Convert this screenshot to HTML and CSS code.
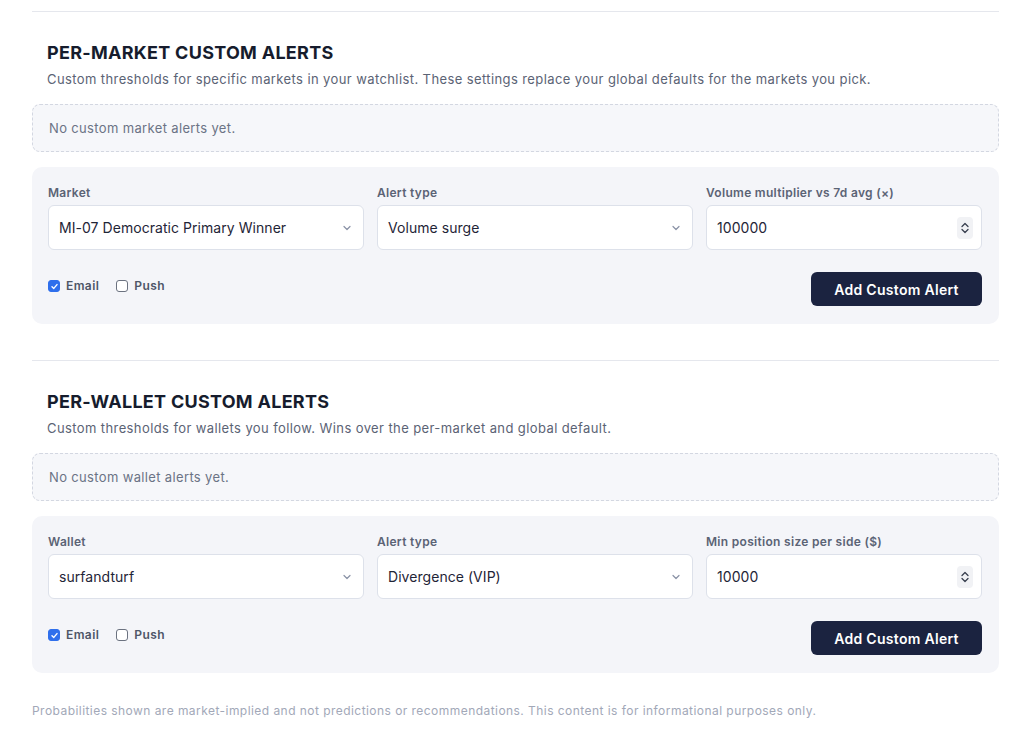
FILE: index.html
```html
<!DOCTYPE html>
<html>
<head>
<meta charset="utf-8">
<link rel="stylesheet" href="styles.css">
</head>
<body>
<div class="page">
  <section class="section">
    <hr class="divider">
    <div class="head">
      <h2 class="title">PER-MARKET CUSTOM ALERTS</h2>
      <p class="desc">Custom thresholds for specific markets in your watchlist. These settings replace your global defaults for the markets you pick.</p>
    </div>
    <div class="empty">No custom market alerts yet.</div>
    <div class="card">
      <div class="fields">
        <div class="field">
          <label class="label">Market</label>
          <div class="control select"><span>MI-07 Democratic Primary Winner</span><svg class="chev" width="8" height="6" viewBox="0 0 8 6"><path d="M1 1.5 L4 4.5 L7 1.5" fill="none" stroke="#8a92a6" stroke-width="1.2" stroke-linecap="round" stroke-linejoin="round"/></svg></div>
        </div>
        <div class="field">
          <label class="label">Alert type</label>
          <div class="control select"><span>Volume surge</span><svg class="chev" width="8" height="6" viewBox="0 0 8 6"><path d="M1 1.5 L4 4.5 L7 1.5" fill="none" stroke="#8a92a6" stroke-width="1.2" stroke-linecap="round" stroke-linejoin="round"/></svg></div>
        </div>
        <div class="field">
          <label class="label">Volume multiplier vs 7d avg (×)</label>
          <div class="control number"><span>100000</span><span class="spin"><svg width="10" height="14" viewBox="0 0 10 14"><path d="M2 5.5 L5 2.5 L8 5.5 M2 8.5 L5 11.5 L8 8.5" fill="none" stroke="#3a4150" stroke-width="1.3" stroke-linecap="round" stroke-linejoin="round"/></svg></span></div>
        </div>
      </div>
      <div class="actions">
        <div class="checks">
          <label class="check"><span class="box on"><svg width="9" height="9" viewBox="0 0 9 9"><path d="M2 4.7 L3.8 6.4 L7 2.6" fill="none" stroke="#fff" stroke-width="1.4" stroke-linecap="round" stroke-linejoin="round"/></svg></span>Email</label>
          <label class="check"><span class="box"></span>Push</label>
        </div>
        <button class="btn">Add Custom Alert</button>
      </div>
    </div>
  </section>

  <section class="section">
    <hr class="divider">
    <div class="head">
      <h2 class="title">PER-WALLET CUSTOM ALERTS</h2>
      <p class="desc">Custom thresholds for wallets you follow. Wins over the per-market and global default.</p>
    </div>
    <div class="empty">No custom wallet alerts yet.</div>
    <div class="card">
      <div class="fields">
        <div class="field">
          <label class="label">Wallet</label>
          <div class="control select"><span>surfandturf</span><svg class="chev" width="8" height="6" viewBox="0 0 8 6"><path d="M1 1.5 L4 4.5 L7 1.5" fill="none" stroke="#8a92a6" stroke-width="1.2" stroke-linecap="round" stroke-linejoin="round"/></svg></div>
        </div>
        <div class="field">
          <label class="label">Alert type</label>
          <div class="control select"><span>Divergence (VIP)</span><svg class="chev" width="8" height="6" viewBox="0 0 8 6"><path d="M1 1.5 L4 4.5 L7 1.5" fill="none" stroke="#8a92a6" stroke-width="1.2" stroke-linecap="round" stroke-linejoin="round"/></svg></div>
        </div>
        <div class="field">
          <label class="label">Min position size per side ($)</label>
          <div class="control number"><span>10000</span><span class="spin"><svg width="10" height="14" viewBox="0 0 10 14"><path d="M2 5.5 L5 2.5 L8 5.5 M2 8.5 L5 11.5 L8 8.5" fill="none" stroke="#3a4150" stroke-width="1.3" stroke-linecap="round" stroke-linejoin="round"/></svg></span></div>
        </div>
      </div>
      <div class="actions">
        <div class="checks">
          <label class="check"><span class="box on"><svg width="9" height="9" viewBox="0 0 9 9"><path d="M2 4.7 L3.8 6.4 L7 2.6" fill="none" stroke="#fff" stroke-width="1.4" stroke-linecap="round" stroke-linejoin="round"/></svg></span>Email</label>
          <label class="check"><span class="box"></span>Push</label>
        </div>
        <button class="btn">Add Custom Alert</button>
      </div>
    </div>
  </section>

  <p class="footer">Probabilities shown are market-implied and not predictions or recommendations. This content is for informational purposes only.</p>
</div>
</body>
</html>
```
FILE: styles.css
```css
* { box-sizing: border-box; }
html, body { margin: 0; padding: 0; background: #fff; }
body { font-family: Inter, "Noto Sans", sans-serif; color: #1a2035; }
.page { width: 967px; margin-left: 32px; padding-top: 11px; }
.section { margin-bottom: 36px; }
.section:last-of-type { margin-bottom: 30px; }
.divider { border: 0; border-top: 1px solid #e5e7ed; margin: 0; }
.head { padding: 30px 15px 0; }
.title { margin: 0; font-size: 18px; font-weight: 700; letter-spacing: 0.28px; line-height: 22px; color: #161c2d; }
.desc { margin: 6px 0 0; font-size: 13px; line-height: 18px; color: #5b6375; letter-spacing: 0.4px; }
.empty { margin-top: 16px; height: 48px; border: 1px dashed #d3d7e1; border-radius: 8px; background: #f6f7fa; padding: 0 16px; display: flex; align-items: center; font-size: 13px; color: #6b7385; letter-spacing: 0.35px; }
.card { margin-top: 15px; background: #f4f5f9; border-radius: 10px; padding: 18px 17px 18px 16px; }
.fields { display: grid; grid-template-columns: 1fr 1fr 276px; gap: 13px; }
.field { display: flex; flex-direction: column; gap: 5px; }
.label { font-size: 12px; font-weight: 600; color: #5b6375; line-height: 15px; letter-spacing: 0.3px; }
.control { height: 45px; background: #fff; border: 1px solid #dde1ea; border-radius: 6px; display: flex; align-items: center; justify-content: space-between; padding: 0 10px 0 10px; font-size: 14px; color: #1f2537; letter-spacing: 0.05px; }
.select .chev { margin-right: 2px; }
.spin { width: 16px; height: 22px; border-radius: 4px; background: #f1f2f5; display: flex; align-items: center; justify-content: center; margin-right: -2px; }
.actions { display: flex; justify-content: space-between; align-items: flex-start; margin-top: 22px; }
.checks { display: flex; gap: 17px; align-items: center; padding-top: 7px; }
.check { display: flex; align-items: center; gap: 6px; font-size: 12px; font-weight: 600; line-height: 14px; color: #4e5668; letter-spacing: 0.4px; }
.box { width: 12px; height: 12px; border-radius: 3px; border: 1.2px solid #6b7280; background: #fff; display: flex; align-items: center; justify-content: center; }
.box.on { background: #2f6fec; border-color: #2f6fec; }
.btn { width: 171px; height: 34px; border: 0; border-radius: 6px; background: #1b2340; color: #fff; font-family: Inter, sans-serif; font-size: 14px; font-weight: 600; letter-spacing: 0.3px; }
.footer { margin: 0; font-size: 12px; line-height: 15px; color: #a2a8b8; letter-spacing: 0.45px; }
```
